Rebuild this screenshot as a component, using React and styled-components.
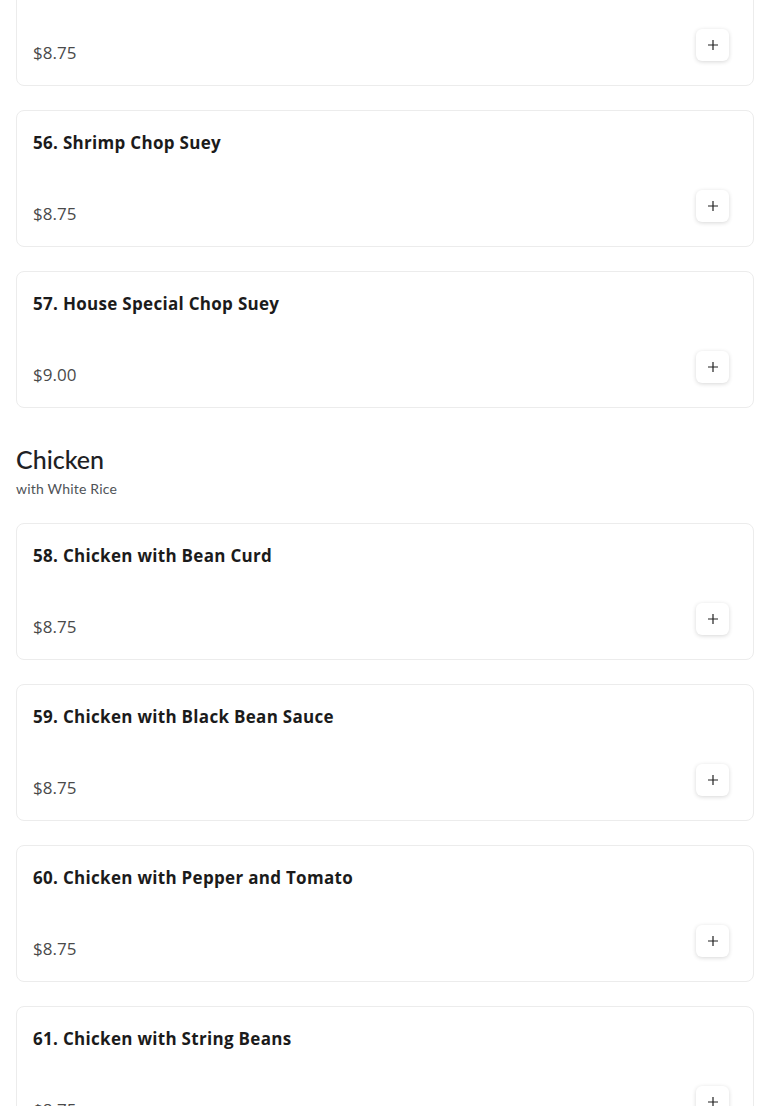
import React from "react";
import styled, { createGlobalStyle } from "styled-components";

const GlobalStyle = createGlobalStyle`
  html, body {
    margin: 0;
    padding: 0;
    background: #ffffff;
  }
  body {
    font-family: "Open Sans", "Liberation Sans", sans-serif;
    color: #1d1d1d;
  }
`;

const Page = styled.div`
  padding: 0 16px 40px;
  margin-top: -51px;
  display: flex;
  flex-direction: column;
  gap: 35px;
`;

const Section = styled.section`
  display: flex;
  flex-direction: column;
`;

const SectionTitle = styled.h2`
  margin: 0;
  font-family: "Lato", "Open Sans", sans-serif;
  font-weight: 500;
  font-size: 25px;
  line-height: 32px;
  color: #202124;
`;

const SectionNote = styled.p`
  margin: 4px 0 0;
  font-family: "Lato", "Open Sans", sans-serif;
  font-size: 14px;
  line-height: 20px;
  letter-spacing: 0.2px;
  color: #4f5357;
`;

const List = styled.div`
  display: flex;
  flex-direction: column;
  gap: 24px;
  margin-top: ${(p) => (p.$headed ? "24px" : "0")};
`;

const Card = styled.div`
  border: 1px solid #ececec;
  border-radius: 8px;
  padding: 20px 24px 16px 16px;
  display: flex;
  flex-direction: column;
  background: #fff;
`;

const ItemName = styled.div`
  font-weight: 700;
  font-size: 17px;
  line-height: 24px;
  letter-spacing: 0.3px;
  color: #1b1b1b;
  margin-bottom: 35px;
`;

const Footer = styled.div`
  display: flex;
  justify-content: space-between;
  align-items: flex-end;
  height: 40px;
`;

const Price = styled.div`
  font-size: 17px;
  line-height: 24px;
  color: #4a4a4a;
  padding-bottom: 4px;
`;

const AddButton = styled.button`
  width: 33px;
  height: 32px;
  margin-bottom: 8px;
  border: none;
  border-radius: 6px;
  background: #fff;
  box-shadow: 0 1px 4px rgba(0, 0, 0, 0.16);
  display: flex;
  align-items: center;
  justify-content: center;
  padding: 0;
  cursor: pointer;
`;

const PlusIcon = () => (
  <svg width="12" height="12" viewBox="0 0 12 12">
    <path d="M6 1v10M1 6h10" stroke="#222" strokeWidth="1.2" />
  </svg>
);

const menu = [
  {
    items: [
      { name: "", price: "$8.75" },
      { name: "56. Shrimp Chop Suey", price: "$8.75" },
      { name: "57. House Special Chop Suey", price: "$9.00" },
    ],
  },
  {
    title: "Chicken",
    note: "with White Rice",
    items: [
      { name: "58. Chicken with Bean Curd", price: "$8.75" },
      { name: "59. Chicken with Black Bean Sauce", price: "$8.75" },
      { name: "60. Chicken with Pepper and Tomato", price: "$8.75" },
      { name: "61. Chicken with String Beans", price: "$8.75" },
    ],
  },
];

export default function App() {
  return (
    <>
      <GlobalStyle />
      <Page>
        {menu.map((section, i) => (
          <Section key={i}>
            {section.title && <SectionTitle>{section.title}</SectionTitle>}
            {section.note && <SectionNote>{section.note}</SectionNote>}
            <List $headed={!!section.title}>
              {section.items.map((item, j) => (
                <Card key={j}>
                  <ItemName>{item.name || "\u00a0"}</ItemName>
                  <Footer>
                    <Price>{item.price}</Price>
                    <AddButton aria-label="Add">
                      <PlusIcon />
                    </AddButton>
                  </Footer>
                </Card>
              ))}
            </List>
          </Section>
        ))}
      </Page>
    </>
  );
}
